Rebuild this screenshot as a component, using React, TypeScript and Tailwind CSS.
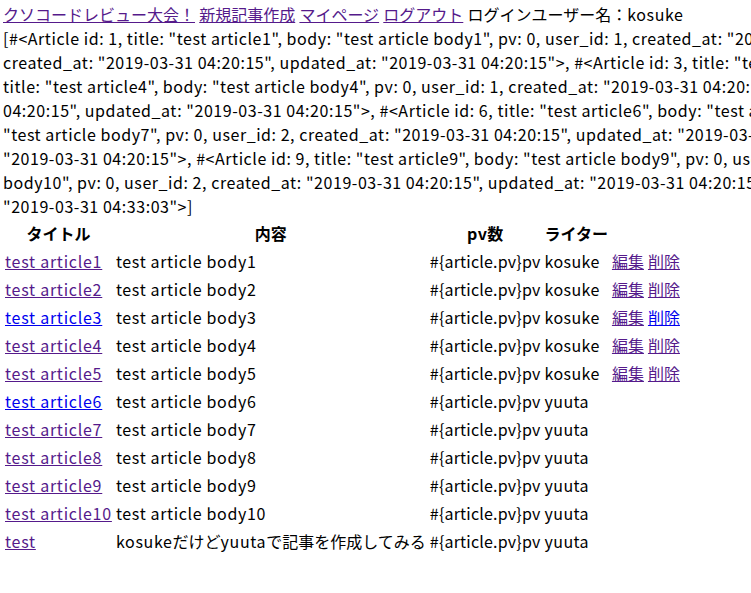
import React from "react";

const V = "text-[#551a8b] underline";
const U = "text-[#0000ee] underline";

const dump = [
  '[#<Article id: 1, title: "test article1", body: "test article body1", pv: 0, user_id: 1, created_at: "2019-03-31 04:20:15", updated_at: "2019-03-31 04:20:15">, #<Article id: 2, title: "test article2", body: "test article body2", pv: 0, user_id: 1,',
  'created_at: "2019-03-31 04:20:15", updated_at: "2019-03-31 04:20:15">, #<Article id: 3, title: "test article3", body: "test article body3", pv: 0, user_id: 1, created_at: "2019-03-31 04:20:15", updated_at: "2019-03-31 04:20:15">, #<Article id: 4,',
  'title: "test article4", body: "test article body4", pv: 0, user_id: 1, created_at: "2019-03-31 04:20:15", updated_at: "2019-03-31 04:20:15">, #<Article id: 5, title: "test article5", body: "test article body5", pv: 0, user_id: 1, created_at: "2019-03-31',
  '04:20:15", updated_at: "2019-03-31 04:20:15">, #<Article id: 6, title: "test article6", body: "test article body6", pv: 0, user_id: 2, created_at: "2019-03-31 04:20:15", updated_at: "2019-03-31 04:20:15">, #<Article id: 7, title: "test article7", body:',
  '"test article body7", pv: 0, user_id: 2, created_at: "2019-03-31 04:20:15", updated_at: "2019-03-31 04:20:15">, #<Article id: 8, title: "test article8", body: "test article body8", pv: 0, user_id: 2, created_at: "2019-03-31 04:20:15", updated_at:',
  '"2019-03-31 04:20:15">, #<Article id: 9, title: "test article9", body: "test article body9", pv: 0, user_id: 2, created_at: "2019-03-31 04:20:15", updated_at: "2019-03-31 04:20:15">, #<Article id: 10, title: "test article10", body: "test article',
  'body10", pv: 0, user_id: 2, created_at: "2019-03-31 04:20:15", updated_at: "2019-03-31 04:20:15">, #<Article id: 11, title: "test", body: "kosukeだけどyuutaで記事を作成してみる", pv: 0, user_id: 2, created_at: "2019-03-31 04:33:03", updated_at:',
  '"2019-03-31 04:33:03">]',
];

type Row = { title: string; body: React.ReactNode; user: string; tv: boolean; dv?: boolean; own: boolean };

const rows: Row[] = [
  { title: "test article1", body: "test article body1", user: "kosuke", tv: true, dv: true, own: true },
  { title: "test article2", body: "test article body2", user: "kosuke", tv: true, dv: true, own: true },
  { title: "test article3", body: "test article body3", user: "kosuke", tv: false, dv: false, own: true },
  { title: "test article4", body: "test article body4", user: "kosuke", tv: true, dv: true, own: true },
  { title: "test article5", body: "test article body5", user: "kosuke", tv: true, dv: true, own: true },
  { title: "test article6", body: "test article body6", user: "yuuta", tv: false, own: false },
  { title: "test article7", body: "test article body7", user: "yuuta", tv: true, own: false },
  { title: "test article8", body: "test article body8", user: "yuuta", tv: true, own: false },
  { title: "test article9", body: "test article body9", user: "yuuta", tv: true, own: false },
  { title: "test article10", body: "test article body10", user: "yuuta", tv: true, own: false },
  {
    title: "test",
    body: (
      <>
        kosuke<span className="tracking-normal">だけど</span>yuuta<span className="tracking-normal">で記事を作成してみる</span>
      </>
    ),
    user: "yuuta",
    tv: true,
    own: false,
  },
];

export default function App() {
  return (
    <div className="w-[751px] h-[593px] overflow-hidden bg-white text-black text-[16px] leading-6 font-['Noto_Sans_CJK_JP',sans-serif] tracking-[0.4px] pt-[2px] pl-[3px]">
      <div className="whitespace-nowrap tracking-[0.6px]">
        <a href="#" className={V + " tracking-normal"}>クソコードレビュー大会！</a>{" "}
        <a href="#" className={V + " tracking-normal"}>新規記事作成</a>{" "}
        <a href="#" className={V + " tracking-normal"}>マイページ</a>{" "}
        <a href="#" className={V + " tracking-normal"}>ログアウト</a>{" "}
        <span className="tracking-normal">ログインユーザー名：</span>kosuke
      </div>
      {dump.map((l, i) => (
        <div key={i} className="whitespace-nowrap tracking-[0.55px]">
          {l}
        </div>
      ))}
      <table className="border-separate border-spacing-[2px] -ml-[1px]">
        <thead>
          <tr>
            <th className="p-[1px] font-bold text-center tracking-normal">タイトル</th>
            <th className="p-[1px] font-bold text-center tracking-normal">内容</th>
            <th className="p-[1px] font-bold text-center">
              pv<span className="tracking-normal">数</span>
            </th>
            <th className="p-[1px] font-bold text-center tracking-normal">ライター</th>
          </tr>
        </thead>
        <tbody>
          {rows.map((r) => (
            <tr key={r.title}>
              <td className="p-[1px] whitespace-nowrap tracking-[0.75px]">
                <a href="#" className={r.tv ? V : U}>{r.title}</a>
              </td>
              <td className="p-[1px] whitespace-nowrap tracking-[0.65px]">{r.body}</td>
              <td className="p-[1px] whitespace-nowrap tracking-[0.2px]">{"#{article.pv}pv"}</td>
              <td className="p-[1px] whitespace-nowrap">{r.user}</td>
              {r.own && (
                <>
                  <td className="p-[1px] whitespace-nowrap">
                    <a href="#" className={V + " tracking-normal"}>編集</a>
                  </td>
                  <td className="p-[1px] whitespace-nowrap">
                    <a href="#" className={(r.dv ? V : U) + " tracking-normal"}>削除</a>
                  </td>
                </>
              )}
            </tr>
          ))}
        </tbody>
      </table>
    </div>
  );
}
